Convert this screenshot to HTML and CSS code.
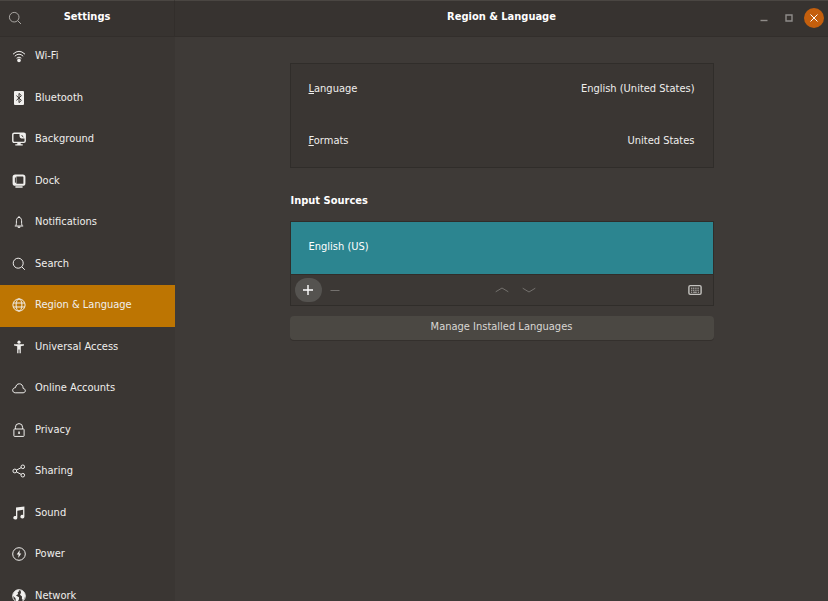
FILE: index.html
```html
<!DOCTYPE html>
<html lang="en">
<head>
<meta charset="utf-8">
<title>Settings</title>
<link rel="stylesheet" href="styles.css">
</head>
<body>
<div class="window">
  <header class="side-header">
    <button class="search-button" type="button" aria-label="Search">
      <svg class="icon" viewBox="0 0 14 14"><circle cx="6.2" cy="6.2" r="4.8"/><path d="M9.7 9.7 13 13"/></svg>
    </button>
    <h2 class="title">Settings</h2>
  </header>
  <header class="main-header">
    <h1 class="title">Region &amp; Language</h1>
    <div class="window-controls">
      <button type="button" aria-label="Minimize"><svg class="icon" viewBox="0 0 14 14"><path class="medium" d="M3.500 9.500h7"/></svg></button>
      <button type="button" aria-label="Maximize"><svg class="icon" viewBox="0 0 14 14"><path class="medium" d="M4 4h6v6H4z"/></svg></button>
      <button class="close" type="button" aria-label="Close"><svg class="icon" viewBox="0 0 14 14"><path d="m3.500 3.500 7 7m0-7-7 7"/></svg></button>
    </div>
  </header>

  <nav class="sidebar">
    <a href="#wifi"><svg class="icon" viewBox="0 0 14 14"><path d="M1 5.200Q7-.6 13 5.200M2.800 7.200q4.200-4 8.400 0M4.600 9.200q2.400-2.200 4.800 0"/><circle class="solid" cx="7" cy="11.400" r="1.800"/></svg>Wi-Fi</a>
    <a href="#bluetooth"><svg class="icon" viewBox="0 0 14 14"><rect class="solid" x="2" width="10" height="14" rx="1"/><path class="cut" d="m4.400 4.600 5 4.800L7 11.600V2.400l2.400 2.200-5 4.800"/></svg>Bluetooth</a>
    <a href="#background"><svg class="icon" viewBox="0 0 14 14"><rect class="medium" x=".8" y="1.200" width="12.400" height="9.200" rx="1.400"/><path class="solid" d="M7.500 1.200h5.700v5.300H9.500Q7.500 6 7.500 4zM5.300 10.400h3.400v1.800h2V13.600H3.300v-1.400h2z"/><path class="cut" d="M9.800 3.200q.3 1.400 1.600 1.800"/></svg>Background</a>
    <a href="#dock"><svg class="icon" viewBox="0 0 14 14"><rect class="thick" x="1.600" y="1.400" width="10.800" height="9.400" rx="1.600"/><path class="solid" d="M2 2h2.400v8H2zM3.400 12.200h7.200v1.500H3.400z"/><path class="cut" d="M3.400 3.500v5.200"/></svg>Dock</a>
    <a href="#notifications"><svg class="icon" viewBox="0 0 14 14"><path d="M2.800 11h8.400M4 10.700c.6-1.200.3-3.300.4-5C4.500 3.500 5.500 2.400 7 2.400s2.500 1.100 2.600 3.300c.1 1.700-.2 3.800.4 5M7 2.400V1"/><path class="solid" d="M5.400 11.400h3.200Q8.400 13 7 13t-1.600-1.600z"/></svg>Notifications</a>
    <a href="#search"><svg class="icon" viewBox="0 0 14 14"><circle cx="6.200" cy="6.200" r="5"/><path d="m9.800 9.800 3 3"/></svg>Search</a>
    <a class="selected" href="#region" aria-current="page"><svg class="icon" viewBox="0 0 14 14"><circle cx="7" cy="7" r="6.100"/><ellipse cx="7" cy="7" rx="2.900" ry="6.100"/><path d="M1.200 5h11.600M1.200 9h11.600"/></svg>Region &amp; Language</a>
    <a href="#access"><svg class="icon" viewBox="0 0 14 14"><circle class="solid" cx="7" cy="2.200" r="1.600"/><path class="solid" d="M2 4.300h10v1.200L8.800 6.300v6.900H7.500V9.400h-1v3.800H5.200V6.300L2 5.500z"/></svg>Universal Access</a>
    <a href="#accounts"><svg class="icon" viewBox="0 0 14 14"><path d="M3.200 11.800h7.900c3-.2 2.900-4 .1-4.300C11 4.300 9.400 2.800 7.300 2.800 5.300 2.800 4 4.200 3.500 6.600-.2 7-.2 11.500 3.200 11.800z"/></svg>Online Accounts</a>
    <a href="#privacy"><svg class="icon" viewBox="0 0 14 14"><rect x="1.900" y="6" width="10.200" height="7.400" rx=".6"/><path d="M3.400 6V4.300q0-3.700 3.600-3.700t3.600 3.700V6"/><path class="solid" d="M6.300 8.600h1.500v2.400H6.300z"/></svg>Privacy</a>
    <a href="#sharing"><svg class="icon" viewBox="0 0 14 14"><circle cx="2.800" cy="7" r="1.900"/><circle cx="10.800" cy="2.800" r="1.800"/><circle cx="10.800" cy="11.200" r="1.800"/><path d="m4.500 6.100 4.700-2.500M4.500 7.900l4.700 2.500"/></svg>Sharing</a>
    <a href="#sound"><svg class="icon" viewBox="0 0 14 14"><path class="solid" d="M4 1.600 12.400.4v10.200a2 1.800 0 1 1-1.300-1.600V3.800L5.300 4.700v7a2 1.800 0 1 1-1.300-1.600z"/></svg>Sound</a>
    <a href="#power"><svg class="icon" viewBox="0 0 14 14"><circle cx="7" cy="7" r="6.300"/><path class="solid" d="M7.800 3 4.700 7.600h1.900L6.200 11l3.100-4.600H7.400z"/></svg>Power</a>
    <a href="#network"><svg class="icon" viewBox="0 0 14 14"><circle cx="7" cy="7" r="6.300"/><path class="solid" d="M1 5.500Q2.500 1 6.500.8L7.200 2 5.600 3.600l.6 1.400L4 6.600l3 1.600v2L5.500 13 4 12.300 3.400 9 1 7zM8.600 1Q13 2 13.200 7l-1.700 4-1.600-.8L10 7.600 8 5.800l1-2z"/></svg>Network</a>
  </nav>

  <main class="content">
    <div class="page">
      <section class="panel locale" aria-label="Locale">
        <button class="row" type="button"><span><u>L</u>anguage</span><span>English (United States)</span></button>
        <button class="row" type="button"><span><u>F</u>ormats</span><span>United States</span></button>
      </section>
      <h2 class="section-title">Input Sources</h2>
      <section class="panel" aria-label="Input sources">
        <button class="row source" type="button">English (US)</button>
        <div class="toolbar">
          <div class="group">
            <button class="add" type="button" aria-label="Add"><svg class="icon" viewBox="0 0 14 14"><path class="medium" d="M7 2v10M2 7h10"/></svg></button>
            <button type="button" aria-label="Remove" disabled><svg class="icon" viewBox="0 0 14 14"><path d="M2.500 7.500h9"/></svg></button>
          </div>
          <div class="group">
            <button type="button" aria-label="Move up" disabled><svg class="icon" viewBox="0 0 14 14"><path d="M.7 8.800 7 5l6.300 3.800"/></svg></button>
            <button type="button" aria-label="Move down" disabled><svg class="icon" viewBox="0 0 14 14"><path d="M.7 5.200 7 9l6.300-3.800"/></svg></button>
          </div>
          <div class="group">
            <button class="layout" type="button" aria-label="Show keyboard layout"><svg class="icon" viewBox="0 0 14 14"><rect class="medium" x=".9" y="2.600" width="12.200" height="8.800" rx="1.400"/><path d="M3 5.200h8M3 7.200h8" stroke-dasharray="1.200 .6"/><path d="M3 9.200h1.200m1 0h3.600m1 0H11"/></svg></button>
          </div>
        </div>
      </section>
      <button class="manage" type="button">Manage Installed Languages</button>
    </div>
  </main>
</div>
</body>
</html>
```

FILE: styles.css
```css
* { box-sizing: border-box; }

body {
  margin: 0;
  background: #3e3a37;
  color: #f0efed;
  font: 11px/16px "DejaVu Sans Condensed", "DejaVu Sans", sans-serif;
}

button {
  padding: 0;
  border: 0;
  background: none;
  color: inherit;
  font: inherit;
}

h1, h2 { margin: 0; }

.window {
  display: grid;
  grid-template: 36px 1fr / 175px 1fr;
  height: 100vh;
  overflow: hidden;
}

.icon {
  display: block;
  flex: none;
  width: 14px;
  height: 14px;
  fill: none;
  stroke: currentColor;
  stroke-width: 1;
}
.icon .solid { fill: currentColor; stroke: none; }
.icon .medium { stroke-width: 1.4; }
.icon .thick { stroke-width: 2; }
.icon .cut { stroke: #393532; }

.side-header, .main-header {
  display: grid;
  align-items: center;
  border-top: 1px solid #4a4642;
  background: #373330;
  box-shadow: 0 1px #322e2b;
  z-index: 1;
}
.side-header { border-right: 1px solid #322e2b; }
.side-header > *, .main-header > * { grid-area: 1 / 1; }

.title {
  padding-bottom: 4px;
  color: #fff;
  font-size: 11px;
  line-height: 16px;
  text-align: center;
}

.search-button {
  z-index: 1;
  justify-self: start;
  padding: 0 8px 2px;
  color: #aaa7a3;
}

.window-controls {
  display: flex;
  gap: 5px;
  justify-self: end;
  padding: 0 4px 2px 0;
  color: #8f8c89;
}
.window-controls button {
  display: grid;
  place-items: center;
  width: 20px;
  height: 20px;
  border-radius: 50%;
}
.window-controls .close { background: #c45f0d; color: #fff; }

.sidebar {
  display: grid;
  grid-auto-rows: 42px 41px;
  align-content: start;
  min-height: 0;
  overflow: hidden;
  background: #3a3633;
}
.sidebar a {
  display: flex;
  align-items: center;
  gap: 9px;
  padding: 0 12px 2px;
  color: inherit;
  text-decoration: none;
}
.sidebar .selected { background: #bd7502; }

.content {
  padding: 27px 24px;
}
.page {
  display: flex;
  flex-direction: column;
  max-width: 424px;
  margin: 0 auto;
}

.panel {
  display: grid;
  border: 1px solid #302d2a;
  background: #3a3633;
}
.locale { grid-template-rows: 52px 51px; }

.row {
  display: flex;
  align-items: center;
  justify-content: space-between;
  padding: 0 18px 2px;
}

.section-title {
  padding: 25px 1px 12px;
  color: #fff;
  font-size: 11px;
  line-height: 16px;
}

.source {
  height: 52px;
  background: #2c8590;
  color: #fff;
}

.toolbar {
  display: flex;
  align-items: center;
  justify-content: space-between;
  height: 31px;
  padding: 0 4px;
  border-top: 1px solid #302d2a;
  background: #3c3835;
}
.group { display: flex; }
.group button {
  display: grid;
  place-items: center;
  width: 27px;
  height: 24px;
  border-radius: 12px;
}
.group button:disabled { color: #74716e; }
.group .add { background: #555350; color: #fff; }
.group .layout { color: #c4c2bf; }

.manage {
  height: 24px;
  margin-top: 10px;
  padding-bottom: 2px;
  border-radius: 4px;
  background: #4b4843;
  box-shadow: 0 1px #34302d;
  color: #d9d7d4;
}
```
